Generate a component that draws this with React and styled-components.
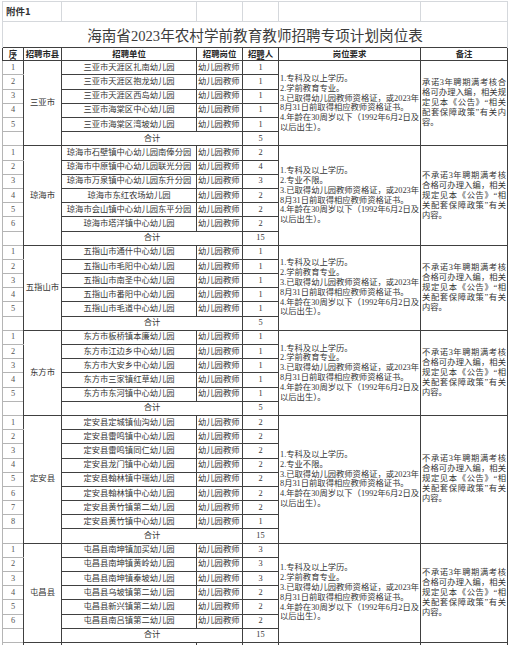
import React from "react";
import styled, { createGlobalStyle } from "styled-components";

const DARK = "#404040";
const LIGHT = "#d5d8dc";
const SEQ = "#b5b5b5";

const Global = createGlobalStyle`
  html, body { margin: 0; padding: 0; background: #fff; }
  body { font-family: "Liberation Serif", "Noto Sans CJK SC", serif; color: #222; }
`;

const Page = styled.div`
  width: 511px;
  height: 645px;
  overflow: hidden;
  background: #fff;
  box-sizing: border-box;
  padding: 1px 0 0 2px;
`;

const Sheet = styled.table`
  border-collapse: collapse;
  table-layout: fixed;
  width: 505px;
  font-family: "Liberation Serif", "Noto Sans CJK SC", serif;
  font-size: 8.3px;
  color: #363636;
`;

const Col = styled.col`
  width: ${(p) => p.$w}px;
`;

const Row = styled.tr`
  height: ${(p) => p.$h}px;
`;

const GridCell = styled.td`
  border: 1px solid ${LIGHT};
  padding: 0 0 0 3px;
  font-family: "Noto Sans CJK SC", sans-serif;
  font-weight: 700;
  font-size: 9.5px;
  color: #333;
  text-align: left;
  vertical-align: middle;
  white-space: nowrap;
`;

const TitleCell = styled.td`
  border: 1px solid ${LIGHT};
  border-bottom-style: none;
  border-top-style: none;
  padding: 0;
  font-family: "Liberation Serif", "Noto Sans CJK SC", serif;
  font-size: 14.6px;
  color: #3c3c3c;
  text-align: center;
  vertical-align: middle;
  white-space: nowrap;
`;

const HeadCell = styled.th`
  border: 1px solid ${DARK};
  padding: 0;
  font-family: "Noto Sans CJK SC", sans-serif;
  font-weight: 700;
  font-size: 8.4px;
  color: #262626;
  text-align: center;
  vertical-align: top;
  white-space: nowrap;
  overflow: hidden;
`;

const HeadClip = styled.div`
  height: 12.8px;
  overflow: hidden;
  line-height: 8.6px;
  padding-top: 1px;
  box-sizing: border-box;
`;

const Cell = styled.td`
  border: 1px solid ${DARK};
  padding: 0 ${(p) => p.$padX ?? 0}px;
  text-align: ${(p) => p.$align || "center"};
  vertical-align: middle;
  white-space: nowrap;
  overflow: hidden;
  line-height: 10px;
`;

const SeqCell = styled(Cell)`
  border-color: ${SEQ} ${DARK} ${SEQ} ${SEQ};
  color: #555;
`;

const CountyCell = styled(Cell)`
  font-size: 8.4px;
`;

const TextBlock = styled.div`
  display: flex;
  flex-direction: column;
  line-height: ${(p) => p.$lh}px;
`;

const Line = styled.div`
  white-space: nowrap;
  text-align: ${(p) => (p.$spread ? "justify" : "left")};
  text-align-last: ${(p) => (p.$spread ? "justify" : "left")};
`;

const REQ_A = "学前教育专业。";
const REQ_B = "专业不限。";

const PROMISE = [
  "承诺3年聘期满考核合",
  "格可办理入编，相关规",
  "定见本《公告》“相关",
  "配套保障政策”有关内",
  "容。",
];
const NO_PROMISE = [
  "不承诺3年聘期满考核",
  "合格可办理入编，相关",
  "规定见本《公告》“相",
  "关配套保障政策”有关",
  "内容。",
];

const groups = [
  {
    county: "三亚市",
    units: [
      "三亚市天涯区扎南幼儿园",
      "三亚市天涯区抱龙幼儿园",
      "三亚市天涯区西岛幼儿园",
      "三亚市海棠区中心幼儿园",
      "三亚市海棠区湾坡幼儿园",
    ],
    counts: [1, 1, 1, 1, 1],
    total: 5,
    major: REQ_A,
    note: PROMISE,
  },
  {
    county: "琼海市",
    units: [
      "琼海市石壁镇中心幼儿园南俸分园",
      "琼海市中原镇中心幼儿园联光分园",
      "琼海市万泉镇中心幼儿园东升分园",
      "琼海市东红农场幼儿园",
      "琼海市会山镇中心幼儿园东平分园",
      "琼海市塔洋镇中心幼儿园",
    ],
    counts: [2, 4, 3, 2, 2, 2],
    total: 15,
    major: REQ_B,
    note: NO_PROMISE,
  },
  {
    county: "五指山市",
    units: [
      "五指山市通什中心幼儿园",
      "五指山市毛阳中心幼儿园",
      "五指山市南圣中心幼儿园",
      "五指山市番阳中心幼儿园",
      "五指山市毛道中心幼儿园",
    ],
    counts: [1, 1, 1, 1, 1],
    total: 5,
    major: REQ_A,
    note: NO_PROMISE,
  },
  {
    county: "东方市",
    units: [
      "东方市板桥镇本廉幼儿园",
      "东方市江边乡中心幼儿园",
      "东方市大安乡中心幼儿园",
      "东方市三家镇红草幼儿园",
      "东方市东河镇中心幼儿园",
    ],
    counts: [1, 1, 1, 1, 1],
    total: 5,
    major: REQ_A,
    note: NO_PROMISE,
  },
  {
    county: "定安县",
    units: [
      "定安县定城镇仙沟幼儿园",
      "定安县雷鸣镇中心幼儿园",
      "定安县雷鸣镇同仁幼儿园",
      "定安县龙门镇中心幼儿园",
      "定安县翰林镇中瑞幼儿园",
      "定安县翰林镇中心幼儿园",
      "定安县黄竹镇第二幼儿园",
      "定安县黄竹镇中心幼儿园",
    ],
    counts: [2, 2, 2, 2, 2, 2, 2, 1],
    total: 15,
    major: REQ_B,
    note: NO_PROMISE,
  },
  {
    county: "屯昌县",
    units: [
      "屯昌县南坤镇加买幼儿园",
      "屯昌县南坤镇黄岭幼儿园",
      "屯昌县南坤镇秦坡幼儿园",
      "屯昌县乌坡镇第二幼儿园",
      "屯昌县新兴镇第二幼儿园",
      "屯昌县南吕镇第二幼儿园",
    ],
    counts: [3, 3, 3, 2, 2, 2],
    total: 15,
    major: REQ_A,
    note: NO_PROMISE,
  },
];

const ROW_H = 14.2;

function reqLines(major) {
  return [
    "1.专科及以上学历。",
    `2.${major}`,
    "3.已取得幼儿园教师资格证，或2023年",
    "8月31日前取得相应教师资格证书。",
    "4.年龄在30周岁以下（1992年6月2日及",
    "以后出生）。",
  ];
}

function Group({ g }) {
  const span = g.units.length + 1;
  return (
    <>
      {g.units.map((u, i) => (
        <Row key={u} $h={ROW_H}>
          <SeqCell>{i + 1}</SeqCell>
          {i === 0 && <CountyCell rowSpan={span}>{g.county}</CountyCell>}
          <Cell>{u}</Cell>
          <Cell $align="left" $padX={1}>幼儿园教师</Cell>
          <Cell>{g.counts[i]}</Cell>
          {i === 0 && (
            <Cell rowSpan={span} $align="left" $padX={1}>
              <TextBlock $lh={9.8}>
                {reqLines(g.major).map((l) => (
                  <Line key={l}>{l}</Line>
                ))}
              </TextBlock>
            </Cell>
          )}
          {i === 0 && (
            <Cell rowSpan={span} $align="left" $padX={1}>
              <TextBlock $lh={10}>
                {g.note.map((l, k) => (
                  <Line key={l} $spread={k < g.note.length - 1}>
                    {l}
                  </Line>
                ))}
              </TextBlock>
            </Cell>
          )}
        </Row>
      ))}
      <Row $h={ROW_H}>
        <SeqCell />
        <Cell colSpan={2}>合计</Cell>
        <Cell>{g.total}</Cell>
      </Row>
    </>
  );
}

export default function App() {
  return (
    <>
      <Global />
      <Page>
        <Sheet>
          <colgroup>
            <Col $w={21} />
            <Col $w={38} />
            <Col $w={135} />
            <Col $w={46} />
            <Col $w={36} />
            <Col $w={142} />
            <Col $w={87} />
          </colgroup>
          <tbody>
            <Row $h={19.5}>
              <GridCell colSpan={2}>附件1</GridCell>
              <GridCell />
              <GridCell />
              <GridCell />
              <GridCell />
              <GridCell />
            </Row>
            <Row $h={26}>
              <TitleCell colSpan={7}>海南省2023年农村学前教育教师招聘专项计划岗位表</TitleCell>
            </Row>
            <Row $h={13.6}>
              <HeadCell>
                <HeadClip>
                  序<br />号
                </HeadClip>
              </HeadCell>
              <HeadCell>
                <HeadClip>招聘市县</HeadClip>
              </HeadCell>
              <HeadCell>
                <HeadClip>招聘单位</HeadClip>
              </HeadCell>
              <HeadCell>
                <HeadClip>招聘岗位</HeadClip>
              </HeadCell>
              <HeadCell>
                <HeadClip>
                  招聘人<br />数
                </HeadClip>
              </HeadCell>
              <HeadCell>
                <HeadClip>岗位要求</HeadClip>
              </HeadCell>
              <HeadCell>
                <HeadClip>备注</HeadClip>
              </HeadCell>
            </Row>
            {groups.map((g) => (
              <Group key={g.county} g={g} />
            ))}
            <Row $h={ROW_H}>
              <SeqCell />
              <Cell />
              <Cell />
              <Cell />
              <Cell />
              <Cell />
              <Cell />
            </Row>
          </tbody>
        </Sheet>
      </Page>
    </>
  );
}
